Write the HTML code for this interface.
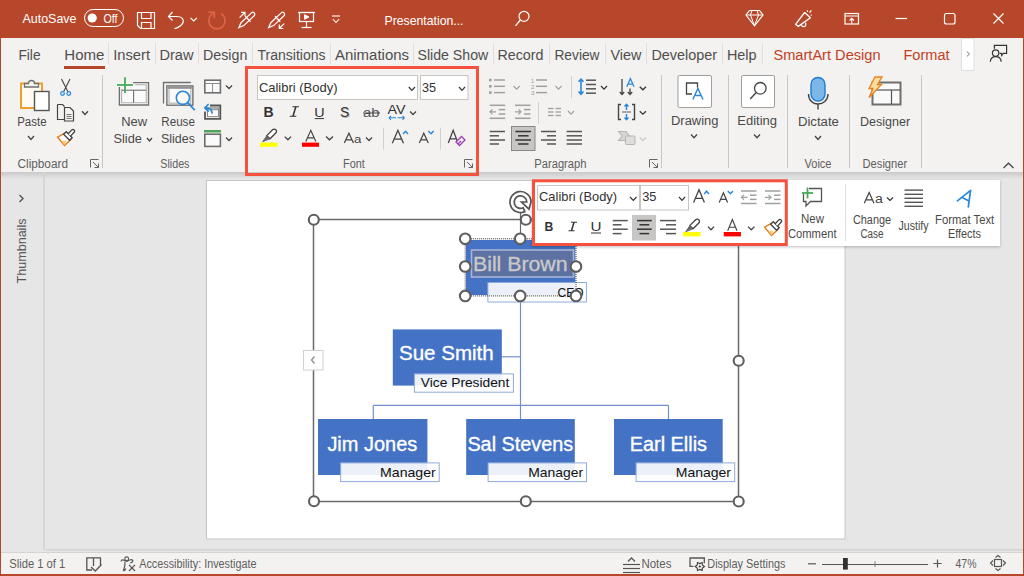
<!DOCTYPE html>
<html><head><meta charset="utf-8"><title>PowerPoint</title>
<style>
html,body{margin:0;padding:0;width:1024px;height:576px;overflow:hidden;background:#E6E6E6}
svg{display:block}
text{font-family:"Liberation Sans",sans-serif}
</style></head><body>
<svg width="1024" height="576" viewBox="0 0 1024 576">
<rect x="0" y="0" width="1024" height="576" fill="#E6E6E6" stroke="none" stroke-width="1" />
<rect x="0" y="0" width="1024" height="38" fill="#B7472A" stroke="none" stroke-width="1" />
<rect x="0" y="38" width="1024" height="134" fill="#F3F2F1" stroke="none" stroke-width="1" />
<defs><linearGradient id="sh" x1="0" y1="0" x2="0" y2="1"><stop offset="0" stop-color="#C9C9C9"/><stop offset="1" stop-color="#E6E6E6"/></linearGradient><filter id="ds" x="-5%" y="-20%" width="110%" height="140%"><feDropShadow dx="0" dy="1" stdDeviation="1.5" flood-color="#000" flood-opacity="0.25"/></filter></defs>
<rect x="0" y="172" width="1024" height="7" fill="url(#sh)" stroke="none" stroke-width="1" />
<rect x="46" y="549" width="978" height="1.6" fill="#D3D3D3" stroke="none" stroke-width="1" />
<rect x="0" y="552" width="1024" height="1" fill="#D4D4D4" stroke="none" stroke-width="1" />
<rect x="0" y="553" width="1024" height="23" fill="#F3F2F1" stroke="none" stroke-width="1" />
<rect x="0" y="37" width="1" height="539" fill="#B7472A" stroke="none" stroke-width="1" />
<rect x="1023" y="37" width="1" height="539" fill="#B7472A" stroke="none" stroke-width="1" />
<rect x="0" y="574" width="1024" height="2" fill="#B7472A" stroke="none" stroke-width="1" />
<text x="22.48" y="23" font-size="13" fill="#FFFFFF" font-weight="normal" font-style="normal" textLength="54.04" lengthAdjust="spacingAndGlyphs" >AutoSave</text>
<rect x="84.5" y="9.5" width="39" height="17" fill="none" stroke="#FFFFFF" stroke-width="1" rx="8.5"/>
<circle cx="92.2" cy="18" r="4.6" fill="#FFFFFF" stroke="none" stroke-width="1" />
<text x="103.52" y="23" font-size="12" fill="#FFFFFF" font-weight="normal" font-style="normal" textLength="13.96" lengthAdjust="spacingAndGlyphs" >Off</text>
<path d="M137.5,12.5 H154.5 V28.5 H140.5 L137.5,25.5 Z" stroke="#FFFFFF" stroke-width="1.2" fill="none" />
<path d="M141.5,12.5 V18.5 H151 V12.5" stroke="#FFFFFF" stroke-width="1.2" fill="none" />
<path d="M141.5,28.5 V22.5 H151 V28.5" stroke="#FFFFFF" stroke-width="1.2" fill="none" />
<path d="M172.5,12 L168.5,16.5 L172.5,20.5" stroke="#FFFFFF" stroke-width="1.2" fill="none" />
<path d="M168.5,16.5 H177 C181.5,16.5 183.8,19 183.2,22 C182.6,24.5 178,27.5 174.5,28.8" stroke="#FFFFFF" stroke-width="1.2" fill="none" />
<path d="M190.5,17.8 L193.75,21 L197,17.8" stroke="#FFFFFF" stroke-width="1.1" fill="none" />
<path d="M211.2,14.8 A8.2,8.2 0 1 0 221.2,13.6" stroke="#E0664C" stroke-width="1.6" fill="none" />
<path d="M208.5,12.3 H214.3 V18.2" stroke="#E0664C" stroke-width="1.6" fill="none" />
<line x1="214.3" y1="12.3" x2="211.2" y2="15.3" stroke="#E0664C" stroke-width="1.4" />
<g transform="translate(238.8,27.6) rotate(-43.5)">
<path d="M0,0 L5,-2 H19.3 A2,2 0 0 1 19.3,2 H5 Z" stroke="#FFFFFF" stroke-width="1.2" fill="none" />
<line x1="12.5" y1="-3.8" x2="12.5" y2="3.8" stroke="#FFFFFF" stroke-width="1.2" />
</g>
<g transform="translate(268.6,27.6) rotate(-43.5)">
<path d="M0,0 L5,-2 H19.3 A2,2 0 0 1 19.3,2 H5 Z" stroke="#FFFFFF" stroke-width="1.2" fill="none" />
<line x1="12.5" y1="-3.8" x2="12.5" y2="3.8" stroke="#FFFFFF" stroke-width="1.2" />
</g>
<path d="M239.6,17.6 L244.6,12.6 M241,12.3 H245 V16.3" stroke="#FFFFFF" stroke-width="1.2" fill="none" />
<path d="M284.2,23.6 L279.3,28.5 M279.3,24.5 V28.5 H283.3" stroke="#FFFFFF" stroke-width="1.2" fill="none" />
<rect x="299.5" y="12.5" width="14" height="9" fill="none" stroke="#FFFFFF" stroke-width="1.2" />
<line x1="298" y1="12.5" x2="315" y2="12.5" stroke="#FFFFFF" stroke-width="1.2" />
<path d="M304.5,14.8 L309,17 L304.5,19.2 Z" stroke="#FFFFFF" stroke-width="1" fill="#FFFFFF" />
<line x1="306.5" y1="21.5" x2="306.5" y2="27.5" stroke="#FFFFFF" stroke-width="1.2" />
<line x1="301.5" y1="27.5" x2="311.5" y2="27.5" stroke="#FFFFFF" stroke-width="1.2" />
<line x1="332" y1="16" x2="340" y2="16" stroke="#FFFFFF" stroke-width="1.1" />
<path d="M332.8,19 L336.0,22.5 L339.2,19" stroke="#FFFFFF" stroke-width="1.1" fill="none" />
<text x="384.48" y="25" font-size="13" fill="#FFFFFF" font-weight="normal" font-style="normal" textLength="79.04" lengthAdjust="spacingAndGlyphs" >Presentation...</text>
<circle cx="524" cy="16.3" r="5" fill="none" stroke="#FFFFFF" stroke-width="1.2" />
<line x1="520.3" y1="20" x2="515.5" y2="25.8" stroke="#FFFFFF" stroke-width="1.3" />
<path d="M749.5,10.5 H759.5 L763,15 L754.5,25.8 L746,15 Z" stroke="#FFFFFF" stroke-width="1.2" fill="none" />
<path d="M746,15 H763 M752,10.5 L750.5,15 L754.5,25.8 L758.5,15 L757,10.5" stroke="#FFFFFF" stroke-width="1" fill="none" />
<path d="M795.6,24.3 L804.6,12.5 L810.4,17.8 L798.3,26.4 Z" stroke="#FFFFFF" stroke-width="1.3" fill="none" stroke-linejoin="round"/>
<path d="M801.6,25 C801.8,27.2 805.5,27.5 805.8,24.6 L805.6,22.6" stroke="#FFFFFF" stroke-width="1.2" fill="none" />
<path d="M807.3,10.3 L807.6,12 M811.3,10.3 L809.6,12.6 M810.6,14.8 L811.8,15.2" stroke="#FFFFFF" stroke-width="1.2" fill="none" />
<rect x="845" y="13.5" width="13.5" height="10.5" fill="none" stroke="#FFFFFF" stroke-width="1.2" />
<line x1="845" y1="16" x2="858.5" y2="16" stroke="#FFFFFF" stroke-width="1" />
<path d="M851.75,23.5 V18.5 M849.5,20.5 L851.75,18.3 L854,20.5" stroke="#FFFFFF" stroke-width="1.1" fill="none" />
<line x1="895.5" y1="18.5" x2="907" y2="18.5" stroke="#FFFFFF" stroke-width="1.2" />
<rect x="944.5" y="13.5" width="10.5" height="10.5" fill="none" stroke="#FFFFFF" stroke-width="1.2" rx="2"/>
<path d="M993.5,13.5 L1003.5,23.5 M1003.5,13.5 L993.5,23.5" stroke="#FFFFFF" stroke-width="1.2" fill="none" />
<text x="18.44" y="59.7" font-size="14" fill="#4F4E4D" font-weight="normal" font-style="normal" textLength="22.12" lengthAdjust="spacingAndGlyphs" >File</text>
<text x="64.34" y="59.7" font-size="14" fill="#4F4E4D" font-weight="normal" font-style="normal" textLength="40.12" lengthAdjust="spacingAndGlyphs" >Home</text>
<text x="113.19" y="59.7" font-size="14" fill="#4F4E4D" font-weight="normal" font-style="normal" textLength="36.87" lengthAdjust="spacingAndGlyphs" >Insert</text>
<text x="159.44" y="59.7" font-size="14" fill="#4F4E4D" font-weight="normal" font-style="normal" textLength="34.12" lengthAdjust="spacingAndGlyphs" >Draw</text>
<text x="203.04" y="59.7" font-size="14" fill="#4F4E4D" font-weight="normal" font-style="normal" textLength="44.27" lengthAdjust="spacingAndGlyphs" >Design</text>
<text x="257.44" y="59.7" font-size="14" fill="#4F4E4D" font-weight="normal" font-style="normal" textLength="68.12" lengthAdjust="spacingAndGlyphs" >Transitions</text>
<text x="334.94" y="59.7" font-size="14" fill="#4F4E4D" font-weight="normal" font-style="normal" textLength="74.12" lengthAdjust="spacingAndGlyphs" >Animations</text>
<text x="417.44" y="59.7" font-size="14" fill="#4F4E4D" font-weight="normal" font-style="normal" textLength="70.87" lengthAdjust="spacingAndGlyphs" >Slide Show</text>
<text x="497.44" y="59.7" font-size="14" fill="#4F4E4D" font-weight="normal" font-style="normal" textLength="46.12" lengthAdjust="spacingAndGlyphs" >Record</text>
<text x="554.44" y="59.7" font-size="14" fill="#4F4E4D" font-weight="normal" font-style="normal" textLength="45.12" lengthAdjust="spacingAndGlyphs" >Review</text>
<text x="610.44" y="59.7" font-size="14" fill="#4F4E4D" font-weight="normal" font-style="normal" textLength="30.87" lengthAdjust="spacingAndGlyphs" >View</text>
<text x="651.44" y="59.7" font-size="14" fill="#4F4E4D" font-weight="normal" font-style="normal" textLength="65.62" lengthAdjust="spacingAndGlyphs" >Developer</text>
<text x="726.94" y="59.7" font-size="14" fill="#4F4E4D" font-weight="normal" font-style="normal" textLength="29.62" lengthAdjust="spacingAndGlyphs" >Help</text>
<rect x="108" y="43" width="1" height="21" fill="#E1DFDD" stroke="none" stroke-width="1" />
<rect x="155" y="43" width="1" height="21" fill="#E1DFDD" stroke="none" stroke-width="1" />
<rect x="198" y="43" width="1" height="21" fill="#E1DFDD" stroke="none" stroke-width="1" />
<rect x="252" y="43" width="1" height="21" fill="#E1DFDD" stroke="none" stroke-width="1" />
<rect x="330" y="43" width="1" height="21" fill="#E1DFDD" stroke="none" stroke-width="1" />
<rect x="413" y="43" width="1" height="21" fill="#E1DFDD" stroke="none" stroke-width="1" />
<rect x="493" y="43" width="1" height="21" fill="#E1DFDD" stroke="none" stroke-width="1" />
<rect x="549" y="43" width="1" height="21" fill="#E1DFDD" stroke="none" stroke-width="1" />
<rect x="605" y="43" width="1" height="21" fill="#E1DFDD" stroke="none" stroke-width="1" />
<rect x="646" y="43" width="1" height="21" fill="#E1DFDD" stroke="none" stroke-width="1" />
<rect x="722" y="43" width="1" height="21" fill="#E1DFDD" stroke="none" stroke-width="1" />
<rect x="762" y="43" width="1" height="21" fill="#E1DFDD" stroke="none" stroke-width="1" />
<rect x="64" y="66" width="41" height="3" fill="#B7472A" stroke="none" stroke-width="1" />
<text x="773.44" y="59.7" font-size="14" fill="#C43E1C" font-weight="normal" font-style="normal" textLength="107.12" lengthAdjust="spacingAndGlyphs" >SmartArt Design</text>
<text x="903.44" y="59.7" font-size="14" fill="#C43E1C" font-weight="normal" font-style="normal" textLength="46.12" lengthAdjust="spacingAndGlyphs" >Format</text>
<rect x="961.5" y="38.5" width="12.5" height="32" fill="#FFFFFF" stroke="#E1DFDD" stroke-width="1" />
<path d="M966.8,51.5 L969.5,54 L966.8,56.5" stroke="#777" stroke-width="1" fill="none" />
<circle cx="995.6" cy="53.1" r="3.2" fill="none" stroke="#333" stroke-width="1.2" />
<path d="M990.3,61.8 C990.5,58.5 993,56.7 995.7,56.7 C998.5,56.7 1001,58.5 1001.2,61.8" stroke="#333" stroke-width="1.2" fill="none" />
<path d="M994.4,48.8 V45.4 H1006.6 V53.3 H1003.2 L1001.8,55.6 L1001.2,53.3 H999.6" stroke="#333" stroke-width="1.2" fill="none" />
<rect x="21" y="83.5" width="21" height="24.5" fill="#FFFBF2" stroke="#EE9F2E" stroke-width="2" />
<path d="M24.5,87 V83.5 H28.5 C28.5,79.5 34.5,79.5 34.5,83.5 H38.5 V87 Z" stroke="#707070" stroke-width="1.3" fill="#F3F2F1" />
<rect x="34.5" y="91.5" width="14.5" height="19" fill="#FFFFFF" stroke="#555" stroke-width="1.4" />
<text x="17.20" y="126" font-size="12.5" fill="#4A4948" font-weight="normal" font-style="normal" textLength="29.40" lengthAdjust="spacingAndGlyphs" >Paste</text>
<path d="M28,136 L31.0,139.5 L34,136" stroke="#444" stroke-width="1.3" fill="none" />
<path d="M61.5,79 L67.8,91.5 M70,79 L63.7,91.5" stroke="#444" stroke-width="1.1" fill="none" />
<circle cx="62.5" cy="93.5" r="1.8" fill="none" stroke="#2B88D8" stroke-width="1.3" />
<circle cx="68.8" cy="93.5" r="1.8" fill="none" stroke="#2B88D8" stroke-width="1.3" />
<path d="M57.5,104.5 H62.5 L64.5,106.5 M57.5,104.5 V119.5 H64" stroke="#444" stroke-width="1.2" fill="none" />
<path d="M64.5,107.5 H70 L73.5,111 V121 H64.5 Z" stroke="#444" stroke-width="1.2" fill="none" />
<path d="M66.5,114.5 H71.5 M66.5,116.5 H71.5 M66.5,118.5 H71.5" stroke="#666" stroke-width="0.9" fill="none" />
<path d="M82,111.2 L85.0,114.5 L88,111.2" stroke="#444" stroke-width="1.3" fill="none" />
<g transform="translate(0,0)">
<path d="M64.3,133.3 L57.6,137.2 L64.5,145.5 L70.8,139.5 Z" stroke="#E67C16" stroke-width="1.4" fill="#FFFFFF" />
<path d="M61.5,141.3 L66.5,140.6 L64.5,145 Z" stroke="none" stroke-width="0" fill="#F9C976" />
<path d="M63.6,134.2 L66.3,131.7 L72.2,137.8 L69.6,140.3 Z" stroke="#404040" stroke-width="1.3" fill="#FFFFFF" />
<path d="M68.2,133.8 L71.8,129.9 C72.5,129.3 73.5,129.3 74.1,130 C74.8,130.6 74.8,131.6 74.1,132.3 L70.5,136.1" stroke="#404040" stroke-width="1.3" fill="#FFFFFF" />
</g>
<text x="17.52" y="167.5" font-size="12" fill="#5F5E5C" font-weight="normal" font-style="normal" textLength="50.46" lengthAdjust="spacingAndGlyphs" >Clipboard</text>
<path d="M90.5,167.5 V159.5 H98.5" stroke="#666" stroke-width="1" fill="none" />
<path d="M93,162 L98.5,167.5 M98.5,163.5 V167.5 H94.5" stroke="#666" stroke-width="1" fill="none" />
<rect x="102" y="75" width="1" height="93" fill="#C8C6C4" stroke="none" stroke-width="1" />
<rect x="120" y="83" width="28.5" height="22" fill="#FAFAFA" stroke="none" stroke-width="1" />
<path d="M133,82.6 H148.5 V105 H119.4 V87" stroke="#707070" stroke-width="1.4" fill="none" />
<path d="M135,84.8 H146.3 V102.8 H121.6 V89" stroke="#B0B0B0" stroke-width="1.1" fill="none" />
<line x1="122" y1="90.2" x2="146" y2="90.2" stroke="#707070" stroke-width="1.1" />
<line x1="133.6" y1="90.2" x2="133.6" y2="102.8" stroke="#707070" stroke-width="1.1" />
<line x1="117" y1="85" x2="133" y2="85" stroke="#4FAE62" stroke-width="1.9" />
<line x1="125" y1="77.2" x2="125" y2="93" stroke="#4FAE62" stroke-width="1.9" />
<text x="121.20" y="125.5" font-size="12.5" fill="#4A4948" font-weight="normal" font-style="normal" textLength="25.90" lengthAdjust="spacingAndGlyphs" >New</text>
<text x="113.50" y="143" font-size="12.5" fill="#4A4948" font-weight="normal" font-style="normal" textLength="28.30" lengthAdjust="spacingAndGlyphs" >Slide</text>
<path d="M147,138 L149.5,141 L152,138" stroke="#444" stroke-width="1.3" fill="none" />
<path d="M163.5,103.5 V82.5 H190.8" stroke="#707070" stroke-width="1.3" fill="none" />
<rect x="167" y="86" width="25.5" height="19" fill="#FAFAFA" stroke="none" stroke-width="1" />
<rect x="166.9" y="85.9" width="26" height="19.3" fill="none" stroke="#707070" stroke-width="1.4" />
<rect x="169" y="88" width="21.8" height="15.2" fill="none" stroke="#B0B0B0" stroke-width="1.1" />
<rect x="167.5" y="86.5" width="25" height="2.2" fill="#909090" stroke="none" stroke-width="1" />
<circle cx="182.9" cy="97.8" r="6.6" fill="#FAFAFA" stroke="#2B88D8" stroke-width="1.6" />
<line x1="187.6" y1="102.6" x2="194.8" y2="110.2" stroke="#2B88D8" stroke-width="1.7" />
<text x="161.30" y="125.5" font-size="12.5" fill="#4A4948" font-weight="normal" font-style="normal" textLength="33.60" lengthAdjust="spacingAndGlyphs" >Reuse</text>
<text x="161.00" y="143" font-size="12.5" fill="#4A4948" font-weight="normal" font-style="normal" textLength="33.90" lengthAdjust="spacingAndGlyphs" >Slides</text>
<rect x="204.8" y="80.2" width="15.6" height="12.6" fill="#FAFAFA" stroke="#6E6E6E" stroke-width="1.6" />
<line x1="205" y1="83.5" x2="220" y2="83.5" stroke="#8A8A8A" stroke-width="1" />
<line x1="212.6" y1="83.5" x2="212.6" y2="92" stroke="#8A8A8A" stroke-width="1" />
<path d="M226,85.5 L229.0,88.5 L232,85.5" stroke="#444" stroke-width="1.3" fill="none" />
<path d="M210,105.5 H220.3 V118.8 H205 V111.5" stroke="#555" stroke-width="1.8" fill="none" />
<rect x="207.5" y="107.8" width="11" height="8.8" fill="#FAFAFA" stroke="#8A8A8A" stroke-width="1" />
<rect x="208" y="108.3" width="10" height="2" fill="#A0A0A0" stroke="none" stroke-width="1" />
<path d="M212,113 C212,110 210.5,107.8 205.5,107.8 M208.2,104.5 L204.8,107.8 L208.2,111.2" stroke="#2B88D8" stroke-width="1.7" fill="none" stroke-linecap="round" stroke-linejoin="round"/>
<rect x="204" y="130" width="17" height="2.5" fill="#4CA65A" stroke="none" stroke-width="1" />
<rect x="204.8" y="134.2" width="15.6" height="12.2" fill="#FAFAFA" stroke="#6E6E6E" stroke-width="1.6" />
<path d="M226,137.5 L229.0,140.5 L232,137.5" stroke="#444" stroke-width="1.3" fill="none" />
<text x="160.32" y="167.6" font-size="12" fill="#5F5E5C" font-weight="normal" font-style="normal" textLength="29.16" lengthAdjust="spacingAndGlyphs" >Slides</text>
<rect x="257.5" y="75.5" width="160" height="24" fill="#FFFFFF" stroke="#C8C6C4" stroke-width="1" />
<text x="258.88" y="91.75" font-size="13" fill="#323130" font-weight="normal" font-style="normal" textLength="78.64" lengthAdjust="spacingAndGlyphs" >Calibri (Body)</text>
<path d="M408.75,87 L411.875,90.3 L415,87" stroke="#333" stroke-width="1.2" fill="none" />
<rect x="420.5" y="75.5" width="47.5" height="24" fill="#FFFFFF" stroke="#C8C6C4" stroke-width="1" />
<text x="421.98" y="91.75" font-size="13" fill="#323130" font-weight="normal" font-style="normal" textLength="14.14" lengthAdjust="spacingAndGlyphs" >35</text>
<path d="M459,87 L462.0,90.3 L465,87" stroke="#333" stroke-width="1.2" fill="none" />
<text x="263.44" y="116.5" font-size="14" fill="#333" font-weight="bold" font-style="normal" textLength="10.12" lengthAdjust="spacingAndGlyphs" >B</text>
<path d="M292.5,106.8 H299 M289.8,116.3 H296.3" stroke="#333" stroke-width="1.1" fill="none" />
<line x1="295.8" y1="106.8" x2="293" y2="116.3" stroke="#333" stroke-width="1.5" />
<text x="314.21" y="116.5" font-size="13.5" fill="#333" font-weight="normal" font-style="normal" textLength="10.33" lengthAdjust="spacingAndGlyphs" >U</text>
<line x1="314.75" y1="118.6" x2="324" y2="118.6" stroke="#333" stroke-width="1" />
<text x="341.04" y="117.5" font-size="14" fill="#BDBDBD" font-weight="normal" font-style="normal" textLength="9.27" lengthAdjust="spacingAndGlyphs" >S</text>
<text x="340.04" y="116.5" font-size="14" fill="#333" font-weight="normal" font-style="normal" textLength="9.27" lengthAdjust="spacingAndGlyphs" >S</text>
<text x="363.00" y="116.5" font-size="12.5" fill="#555" font-weight="normal" font-style="normal" textLength="16.50" lengthAdjust="spacingAndGlyphs" >ab</text>
<line x1="363" y1="113" x2="380" y2="113" stroke="#444" stroke-width="1" />
<text x="387.48" y="114" font-size="13" fill="#333" font-weight="normal" font-style="normal" textLength="18.04" lengthAdjust="spacingAndGlyphs" >AV</text>
<path d="M389,117.8 H396 M389,117.8 L391,115.8 M389,117.8 L391,119.8 M397.5,117.8 H404.5 M404.5,117.8 L402.5,115.8 M404.5,117.8 L402.5,119.8" stroke="#2B88D8" stroke-width="1.1" fill="none" />
<path d="M410,111.5 L413.0,114.5 L416,111.5" stroke="#444" stroke-width="1.3" fill="none" />
<g transform="translate(0,0)">
<path d="M266.8,135.6 L272.6,129.8 C273.5,128.9 274.9,128.9 275.8,129.8 C276.7,130.7 276.7,132.1 275.8,133 L270,138.8 Z" stroke="#404040" stroke-width="1.3" fill="#FFFFFF" />
<path d="M266.8,135.6 L262.6,141.8 L270,138.8 Z" stroke="#606060" stroke-width="0.8" fill="#6A6A6A" />
</g>
<rect x="260" y="142.6" width="17.5" height="4.2" fill="#FFFF00" stroke="none" stroke-width="1" />
<path d="M284.75,136.6 L287.875,139.8 L291,136.6" stroke="#444" stroke-width="1.3" fill="none" />
<path d="M305.8,141.4 L310.8,130.3 L315.8,141.4 M307.80,137.85 H313.80" stroke="#444" stroke-width="1.15" fill="none" stroke-linejoin="miter"/>
<rect x="302" y="142.6" width="17" height="4.2" fill="#FF0000" stroke="none" stroke-width="1" />
<path d="M326,136.6 L329.5,139.8 L333,136.6" stroke="#444" stroke-width="1.3" fill="none" />
<path d="M344.3,143 L348.9,133.2 L353.5,143 M346.14,139.86 H351.66" stroke="#444" stroke-width="1.2" fill="none" stroke-linejoin="miter"/>
<text x="354.04" y="143" font-size="11.5" fill="#444" font-weight="normal" font-style="normal" textLength="7.42" lengthAdjust="spacingAndGlyphs" >a</text>
<path d="M366,137.5 L369.0,140.5 L372,137.5" stroke="#444" stroke-width="1.3" fill="none" />
<rect x="383" y="127.6" width="1" height="22" fill="#D2D0CE" stroke="none" stroke-width="1" />
<path d="M392.3,143.2 L397.9,130.3 L403.5,143.2 M394.54,139.07 H401.26" stroke="#444" stroke-width="1.3" fill="none" stroke-linejoin="miter"/>
<path d="M403,134 L405.5,131.2 L408,134" stroke="#2B88D8" stroke-width="1.4" fill="none" />
<path d="M419.3,143 L423.8,133.2 L428.3,143 M421.10,139.86 H426.50" stroke="#444" stroke-width="1.2" fill="none" stroke-linejoin="miter"/>
<path d="M428.3,131 L431,133.8 L433.7,131" stroke="#2B88D8" stroke-width="1.4" fill="none" />
<rect x="440" y="127.6" width="1" height="22" fill="#D2D0CE" stroke="none" stroke-width="1" />
<path d="M448.3,143 L453.15,130.3 L458,143 M450.24,138.94 H456.06" stroke="#444" stroke-width="1.3" fill="none" stroke-linejoin="miter"/>
<path d="M456,142 L461.5,136.5 L465,140 L459.5,145.5 Z" stroke="#A03BB8" stroke-width="1.3" fill="#F3F2F1" />
<path d="M458,144 L461,141" stroke="#A03BB8" stroke-width="1.2" fill="none" />
<text x="343.02" y="167.6" font-size="12" fill="#5F5E5C" font-weight="normal" font-style="normal" textLength="21.86" lengthAdjust="spacingAndGlyphs" >Font</text>
<path d="M464.5,167.5 V159.5 H472.5" stroke="#666" stroke-width="1" fill="none" />
<path d="M467,162 L472.5,167.5 M472.5,163.5 V167.5 H468.5" stroke="#666" stroke-width="1" fill="none" />
<rect x="489" y="78.7" width="2.6" height="2.6" fill="#A19F9D" stroke="none" stroke-width="1" />
<line x1="494" y1="80" x2="505" y2="80" stroke="#A19F9D" stroke-width="1.5" />
<rect x="489" y="85.0" width="2.6" height="2.6" fill="#A19F9D" stroke="none" stroke-width="1" />
<line x1="494" y1="86.3" x2="505" y2="86.3" stroke="#A19F9D" stroke-width="1.5" />
<rect x="489" y="91.3" width="2.6" height="2.6" fill="#A19F9D" stroke="none" stroke-width="1" />
<line x1="494" y1="92.6" x2="505" y2="92.6" stroke="#A19F9D" stroke-width="1.5" />
<path d="M513.5,86 L516.625,89.2 L519.75,86" stroke="#A19F9D" stroke-width="1.1" fill="none" />
<text x="530.80" y="82.5" font-size="5" fill="#A19F9D" font-weight="normal" font-style="normal" textLength="3.40" lengthAdjust="spacingAndGlyphs" >1</text>
<text x="530.80" y="88.8" font-size="5" fill="#A19F9D" font-weight="normal" font-style="normal" textLength="3.90" lengthAdjust="spacingAndGlyphs" >2</text>
<text x="530.80" y="95" font-size="5" fill="#A19F9D" font-weight="normal" font-style="normal" textLength="3.90" lengthAdjust="spacingAndGlyphs" >3</text>
<line x1="536" y1="80" x2="547" y2="80" stroke="#A19F9D" stroke-width="1.5" />
<line x1="536" y1="86.3" x2="547" y2="86.3" stroke="#A19F9D" stroke-width="1.5" />
<line x1="536" y1="92.6" x2="547" y2="92.6" stroke="#A19F9D" stroke-width="1.5" />
<path d="M555.4,86 L558.5,89.2 L561.6,86" stroke="#A19F9D" stroke-width="1.1" fill="none" />
<rect x="571" y="76" width="1" height="22" fill="#D2D0CE" stroke="none" stroke-width="1" />
<path d="M581,79 V94 M578.5,81.8 L581,79.2 L583.5,81.8 M578.5,91.5 L581,94.2 L583.5,91.5" stroke="#2B88D8" stroke-width="1.6" fill="none" />
<line x1="586" y1="80.2" x2="596" y2="80.2" stroke="#555" stroke-width="1.5" />
<line x1="586" y1="84.5" x2="596" y2="84.5" stroke="#555" stroke-width="1.5" />
<line x1="586" y1="88.8" x2="596" y2="88.8" stroke="#555" stroke-width="1.5" />
<line x1="586" y1="93.2" x2="596" y2="93.2" stroke="#555" stroke-width="1.5" />
<path d="M601,86 L604.0,89.2 L607,86" stroke="#333" stroke-width="1.2" fill="none" />
<line x1="489.75" y1="105.3" x2="505.25" y2="105.3" stroke="#A19F9D" stroke-width="1.5" />
<line x1="489.75" y1="118.3" x2="505.25" y2="118.3" stroke="#A19F9D" stroke-width="1.5" />
<line x1="498.75" y1="109.6" x2="505.25" y2="109.6" stroke="#A19F9D" stroke-width="1.5" />
<line x1="498.75" y1="114" x2="505.25" y2="114" stroke="#A19F9D" stroke-width="1.5" />
<line x1="515" y1="105.3" x2="530.5" y2="105.3" stroke="#A19F9D" stroke-width="1.5" />
<line x1="515" y1="118.3" x2="530.5" y2="118.3" stroke="#A19F9D" stroke-width="1.5" />
<line x1="524" y1="109.6" x2="530.5" y2="109.6" stroke="#A19F9D" stroke-width="1.5" />
<line x1="524" y1="114" x2="530.5" y2="114" stroke="#A19F9D" stroke-width="1.5" />
<path d="M490,111.8 H496 M492.5,109.3 L490,111.8 L492.5,114.3" stroke="#A19F9D" stroke-width="1.2" fill="none" />
<path d="M515,111.8 H521 M518.5,109.3 L521,111.8 L518.5,114.3" stroke="#A19F9D" stroke-width="1.2" fill="none" />
<rect x="538" y="102" width="1" height="22" fill="#D2D0CE" stroke="none" stroke-width="1" />
<line x1="548" y1="108.5" x2="553.5" y2="108.5" stroke="#A19F9D" stroke-width="1.3" />
<line x1="555.5" y1="108.5" x2="561" y2="108.5" stroke="#A19F9D" stroke-width="1.3" />
<line x1="548" y1="112" x2="553.5" y2="112" stroke="#A19F9D" stroke-width="1.3" />
<line x1="555.5" y1="112" x2="561" y2="112" stroke="#A19F9D" stroke-width="1.3" />
<line x1="548" y1="115.5" x2="553.5" y2="115.5" stroke="#A19F9D" stroke-width="1.3" />
<line x1="555.5" y1="115.5" x2="561" y2="115.5" stroke="#A19F9D" stroke-width="1.3" />
<path d="M568,111 L571.0,114.2 L574,111" stroke="#A19F9D" stroke-width="1.1" fill="none" />
<rect x="511.5" y="126.5" width="23.5" height="24" fill="#C8C6C4" stroke="#8A8886" stroke-width="1" />
<line x1="489.75" y1="131.5" x2="505" y2="131.5" stroke="#555" stroke-width="1.5" />
<line x1="489.75" y1="135.8" x2="499" y2="135.8" stroke="#555" stroke-width="1.5" />
<line x1="489.75" y1="140" x2="505" y2="140" stroke="#555" stroke-width="1.5" />
<line x1="489.75" y1="144" x2="499" y2="144" stroke="#555" stroke-width="1.5" />
<line x1="515.4" y1="131.5" x2="531" y2="131.5" stroke="#333" stroke-width="1.5" />
<line x1="518" y1="135.8" x2="528.5" y2="135.8" stroke="#333" stroke-width="1.5" />
<line x1="515.4" y1="140" x2="531" y2="140" stroke="#333" stroke-width="1.5" />
<line x1="518" y1="144" x2="528.5" y2="144" stroke="#333" stroke-width="1.5" />
<line x1="541" y1="131.5" x2="556" y2="131.5" stroke="#555" stroke-width="1.5" />
<line x1="547" y1="135.8" x2="556" y2="135.8" stroke="#555" stroke-width="1.5" />
<line x1="541" y1="140" x2="556" y2="140" stroke="#555" stroke-width="1.5" />
<line x1="547" y1="144" x2="556" y2="144" stroke="#555" stroke-width="1.5" />
<line x1="566.6" y1="131.5" x2="582" y2="131.5" stroke="#555" stroke-width="1.5" />
<line x1="566.6" y1="135.8" x2="582" y2="135.8" stroke="#555" stroke-width="1.5" />
<line x1="566.6" y1="140" x2="582" y2="140" stroke="#555" stroke-width="1.5" />
<line x1="566.6" y1="144" x2="582" y2="144" stroke="#555" stroke-width="1.5" />
<path d="M622,79 V94.5 M619.8,92 L622,94.6 L624.2,92" stroke="#444" stroke-width="1.3" fill="none" />
<path d="M630,88.5 V94.5 M627.8,92 L630,94.6 L632.2,92" stroke="#444" stroke-width="1.3" fill="none" />
<path d="M626.8,86.8 L630.4,78.6 L634,86.8 M628.24,84.18 H632.56" stroke="#2B88D8" stroke-width="1.3" fill="none" stroke-linejoin="miter"/>
<path d="M639.75,86.8 L642.875,89.8 L646,86.8" stroke="#333" stroke-width="1.2" fill="none" />
<path d="M621,104.5 H618.5 V119.5 H621 M632,104.5 H634.5 V119.5 H632" stroke="#444" stroke-width="1.4" fill="none" />
<line x1="622" y1="112" x2="631" y2="112" stroke="#777" stroke-width="1.2" />
<path d="M626.5,104.5 V110 M624.5,106.5 L626.5,104.3 L628.5,106.5 M626.5,114 V119.5 M624.5,117.5 L626.5,119.7 L628.5,117.5" stroke="#2B88D8" stroke-width="1.4" fill="none" />
<path d="M639.75,111.2 L642.875,114.2 L646,111.2" stroke="#333" stroke-width="1.2" fill="none" />
<path d="M618.5,131.5 H626 L629.5,136 L626,140.5 H618.5 L622,136 Z" stroke="#B8B6B4" stroke-width="1.1" fill="#D8D6D4" />
<rect x="625.5" y="136" width="9.5" height="8.5" fill="#E0DEDC" stroke="#B8B6B4" stroke-width="1" rx="1"/>
<path d="M639.75,137.5 L642.875,140.5 L646,137.5" stroke="#C8C6C4" stroke-width="1.1" fill="none" />
<text x="534.27" y="167.6" font-size="12" fill="#5F5E5C" font-weight="normal" font-style="normal" textLength="52.21" lengthAdjust="spacingAndGlyphs" >Paragraph</text>
<path d="M649.5,167.5 V159.5 H657.5" stroke="#666" stroke-width="1" fill="none" />
<path d="M652,162 L657.5,167.5 M657.5,163.5 V167.5 H653.5" stroke="#666" stroke-width="1" fill="none" />
<rect x="661" y="75" width="1" height="93" fill="#C8C6C4" stroke="none" stroke-width="1" />
<rect x="678" y="75.5" width="33.5" height="32" fill="#FFFFFF" stroke="#A19F9D" stroke-width="1" rx="1.5"/>
<path d="M697.5,87.5 V83 H686.5 V94 H692" stroke="#444" stroke-width="1.3" fill="none" />
<path d="M692.8,99.5 L697.9,88.5 L703,99.5 M694.7,95.5 H701.1" stroke="#2B88D8" stroke-width="1.4" fill="none" />
<text x="671.00" y="124.5" font-size="12.5" fill="#4A4948" font-weight="normal" font-style="normal" textLength="47.50" lengthAdjust="spacingAndGlyphs" >Drawing</text>
<path d="M691,134.5 L694.0,137.8 L697,134.5" stroke="#444" stroke-width="1.3" fill="none" />
<rect x="728" y="75" width="1" height="93" fill="#C8C6C4" stroke="none" stroke-width="1" />
<rect x="741.5" y="75.5" width="33" height="32" fill="#FFFFFF" stroke="#A19F9D" stroke-width="1" rx="1.5"/>
<circle cx="760.3" cy="88.3" r="5.8" fill="none" stroke="#444" stroke-width="1.3" />
<line x1="756.2" y1="92.5" x2="750.2" y2="99" stroke="#444" stroke-width="1.4" />
<text x="737.25" y="124.5" font-size="12.5" fill="#4A4948" font-weight="normal" font-style="normal" textLength="39.75" lengthAdjust="spacingAndGlyphs" >Editing</text>
<path d="M754,134.5 L757.0,137.8 L760,134.5" stroke="#444" stroke-width="1.3" fill="none" />
<rect x="787" y="75" width="1" height="93" fill="#C8C6C4" stroke="none" stroke-width="1" />
<rect x="811" y="77.5" width="14" height="23.5" fill="#7CB7EA" stroke="#1F7BD0" stroke-width="1.4" rx="7"/>
<path d="M808.5,94 C808.5,100 812.5,104 818,104 C823.5,104 828,100 828,94" stroke="#444" stroke-width="1.4" fill="none" />
<line x1="818" y1="104" x2="818" y2="109.6" stroke="#444" stroke-width="1.4" />
<text x="797.90" y="125.5" font-size="12.5" fill="#4A4948" font-weight="normal" font-style="normal" textLength="41.00" lengthAdjust="spacingAndGlyphs" >Dictate</text>
<path d="M815,136 L818.0,139.5 L821,136" stroke="#444" stroke-width="1.3" fill="none" />
<text x="804.52" y="167.6" font-size="12" fill="#5F5E5C" font-weight="normal" font-style="normal" textLength="26.96" lengthAdjust="spacingAndGlyphs" >Voice</text>
<rect x="849" y="75" width="1" height="93" fill="#C8C6C4" stroke="none" stroke-width="1" />
<rect x="872.5" y="82.5" width="28" height="22" fill="#FAFAFA" stroke="#6E6E6E" stroke-width="2" />
<line x1="873" y1="90" x2="900" y2="90" stroke="#555" stroke-width="1.2" />
<line x1="891.5" y1="90" x2="891.5" y2="104" stroke="#555" stroke-width="1.2" />
<path d="M875,77 H882 L877.5,84.5 H881.5 L869,97.5 L873,88.5 H869 Z" stroke="#E8821E" stroke-width="1.3" fill="#FCDFA0" />
<text x="860.00" y="125.5" font-size="12.5" fill="#4A4948" font-weight="normal" font-style="normal" textLength="50.10" lengthAdjust="spacingAndGlyphs" >Designer</text>
<text x="862.52" y="167.6" font-size="12" fill="#5F5E5C" font-weight="normal" font-style="normal" textLength="44.71" lengthAdjust="spacingAndGlyphs" >Designer</text>
<rect x="921" y="75" width="1" height="93" fill="#C8C6C4" stroke="none" stroke-width="1" />
<path d="M1003.5,168 L1008.5,163.2 L1013.5,168" stroke="#444" stroke-width="1.2" fill="none" />
<rect x="43" y="172" width="2" height="378" fill="#D6D6D6" stroke="none" stroke-width="1" />
<path d="M19.5,195 L23,198.5 L19.5,202" stroke="#555" stroke-width="1.4" fill="none" />
<text x="0" y="0" font-size="13" fill="#555" textLength="65" lengthAdjust="spacingAndGlyphs" transform="translate(26,283.5) rotate(-90)">Thumbnails</text>
<rect x="206.5" y="180.5" width="638.5" height="358.5" fill="#FFFFFF" stroke="#C8C6C4" stroke-width="1" />
<rect x="313.5" y="219.5" width="425" height="282" fill="none" stroke="#6A6A6A" stroke-width="1.5" />
<line x1="520.5" y1="302" x2="520.5" y2="419" stroke="#7090CC" stroke-width="1.2" />
<line x1="501.5" y1="356.8" x2="520.5" y2="356.8" stroke="#7090CC" stroke-width="1.2" />
<line x1="373.3" y1="405.3" x2="668.5" y2="405.3" stroke="#7090CC" stroke-width="1.2" />
<line x1="373.3" y1="405.3" x2="373.3" y2="419" stroke="#7090CC" stroke-width="1.2" />
<line x1="668.5" y1="405.3" x2="668.5" y2="419" stroke="#7090CC" stroke-width="1.2" />
<rect x="466" y="240" width="109.3" height="55" fill="#4472C4" stroke="none" stroke-width="1" />
<rect x="392.8" y="329.4" width="109" height="56.2" fill="#4472C4" stroke="none" stroke-width="1" />
<rect x="318" y="419" width="109.4" height="56" fill="#4472C4" stroke="none" stroke-width="1" />
<rect x="466.2" y="419" width="108.6" height="56" fill="#4472C4" stroke="none" stroke-width="1" />
<rect x="614" y="419" width="108.7" height="56" fill="#4472C4" stroke="none" stroke-width="1" />
<rect x="471.5" y="250" width="102" height="27" fill="#5E71A3" stroke="#A7B4D6" stroke-width="1.6" />
<text x="472.98" y="270.6" font-size="20.5" fill="#C9C9C9" font-weight="normal" font-style="normal" textLength="94.59" lengthAdjust="spacingAndGlyphs" stroke="#C9C9C9" stroke-width="0.35">Bill Brown</text>
<text x="398.98" y="359.8" font-size="20.5" fill="#FFFFFF" font-weight="normal" font-style="normal" textLength="94.74" lengthAdjust="spacingAndGlyphs" stroke="#FFFFFF" stroke-width="0.35">Sue Smith</text>
<text x="327.38" y="450.7" font-size="20.5" fill="#FFFFFF" font-weight="normal" font-style="normal" textLength="89.94" lengthAdjust="spacingAndGlyphs" stroke="#FFFFFF" stroke-width="0.35">Jim Jones</text>
<text x="467.38" y="450.7" font-size="20.5" fill="#FFFFFF" font-weight="normal" font-style="normal" textLength="105.84" lengthAdjust="spacingAndGlyphs" stroke="#FFFFFF" stroke-width="0.35">Sal Stevens</text>
<text x="629.68" y="450.7" font-size="20.5" fill="#FFFFFF" font-weight="normal" font-style="normal" textLength="77.39" lengthAdjust="spacingAndGlyphs" stroke="#FFFFFF" stroke-width="0.35">Earl Ellis</text>
<rect x="487.9" y="282.5" width="98.5" height="19.5" fill="#FFFFFF" stroke="#8FAADC" stroke-width="1" fill-opacity="0.9"/>
<text x="557.48" y="296.6" font-size="13" fill="#111" font-weight="normal" font-style="normal" textLength="26.04" lengthAdjust="spacingAndGlyphs" >CEO</text>
<rect x="414.4" y="373.9" width="99" height="18.3" fill="#FFFFFF" stroke="#8FAADC" stroke-width="1" fill-opacity="0.9"/>
<text x="420.88" y="386.8" font-size="13" fill="#111" font-weight="normal" font-style="normal" textLength="88.44" lengthAdjust="spacingAndGlyphs" >Vice President</text>
<rect x="340.7" y="462.9" width="98.5" height="18.7" fill="#FFFFFF" stroke="#8FAADC" stroke-width="1" fill-opacity="0.9"/>
<text x="380.08" y="476.5" font-size="13" fill="#111" font-weight="normal" font-style="normal" textLength="55.69" lengthAdjust="spacingAndGlyphs" >Manager</text>
<rect x="488.1" y="462.9" width="98.4" height="18.7" fill="#FFFFFF" stroke="#8FAADC" stroke-width="1" fill-opacity="0.9"/>
<text x="528.18" y="476.5" font-size="13" fill="#111" font-weight="normal" font-style="normal" textLength="54.94" lengthAdjust="spacingAndGlyphs" >Manager</text>
<rect x="636.1" y="462.9" width="98.6" height="18.7" fill="#FFFFFF" stroke="#8FAADC" stroke-width="1" fill-opacity="0.9"/>
<text x="675.73" y="476.5" font-size="13" fill="#111" font-weight="normal" font-style="normal" textLength="55.29" lengthAdjust="spacingAndGlyphs" >Manager</text>
<rect x="465.2" y="238.8" width="110.8" height="57.1" fill="none" stroke="#333" stroke-width="1" stroke-dasharray="1,1"/>
<line x1="520.5" y1="211.5" x2="520.5" y2="234" stroke="#6A6A6A" stroke-width="1.2" />
<path d="M531,202 A10.5,10.5 0 1 0 524.8,211.6 L523.2,207.8 A6.3,6.3 0 1 1 526.8,202 L521.5,202 L529,209.2 Z" stroke="#555" stroke-width="1.7" fill="#FFFFFF" />
<circle cx="313.8" cy="219.7" r="5" fill="#FFFFFF" stroke="#5E5E5E" stroke-width="2.1" />
<circle cx="525.8" cy="219.8" r="5" fill="#FFFFFF" stroke="#5E5E5E" stroke-width="2.1" />
<circle cx="738.6" cy="219.7" r="5" fill="#FFFFFF" stroke="#5E5E5E" stroke-width="2.1" />
<circle cx="313.8" cy="360.6" r="5" fill="#FFFFFF" stroke="#5E5E5E" stroke-width="2.1" />
<circle cx="738.7" cy="360.8" r="5" fill="#FFFFFF" stroke="#5E5E5E" stroke-width="2.1" />
<circle cx="314" cy="501.3" r="5" fill="#FFFFFF" stroke="#5E5E5E" stroke-width="2.1" />
<circle cx="525.8" cy="501.3" r="5" fill="#FFFFFF" stroke="#5E5E5E" stroke-width="2.1" />
<circle cx="738.7" cy="501.5" r="5" fill="#FFFFFF" stroke="#5E5E5E" stroke-width="2.1" />
<circle cx="465.2" cy="238.8" r="5.3" fill="#FFFFFF" stroke="#5E5E5E" stroke-width="2.1" />
<circle cx="520.2" cy="238.8" r="5.3" fill="#FFFFFF" stroke="#5E5E5E" stroke-width="2.1" />
<circle cx="465.2" cy="266.5" r="5.3" fill="#FFFFFF" stroke="#5E5E5E" stroke-width="2.1" />
<circle cx="576" cy="266.5" r="5.3" fill="#FFFFFF" stroke="#5E5E5E" stroke-width="2.1" />
<circle cx="465.2" cy="295.9" r="5.3" fill="#FFFFFF" stroke="#5E5E5E" stroke-width="2.1" />
<circle cx="520.2" cy="295.9" r="5.3" fill="#FFFFFF" stroke="#5E5E5E" stroke-width="2.1" />
<circle cx="576" cy="295.9" r="5.3" fill="#FFFFFF" stroke="#5E5E5E" stroke-width="2.1" />
<rect x="303.5" y="350.5" width="19.5" height="19.5" fill="#FFFFFF" stroke="#D0D0D0" stroke-width="1" />
<path d="M314.5,356.5 L311.5,360 L314.5,363.5" stroke="#888" stroke-width="1.2" fill="none" />
<g filter="url(#ds)">
<rect x="532" y="180" width="468" height="66" fill="#FFFFFF" stroke="none" stroke-width="1" />
</g>
<rect x="845" y="184" width="1" height="57" fill="#E1DFDD" stroke="none" stroke-width="1" />
<rect x="537.5" y="185.5" width="102" height="24.5" fill="#FFFFFF" stroke="#C8C6C4" stroke-width="1" />
<text x="539.08" y="201.4" font-size="13" fill="#323130" font-weight="normal" font-style="normal" textLength="77.94" lengthAdjust="spacingAndGlyphs" >Calibri (Body)</text>
<path d="M630,197 L633.25,200.3 L636.5,197" stroke="#333" stroke-width="1.2" fill="none" />
<rect x="640.5" y="185.5" width="48" height="24.5" fill="#FFFFFF" stroke="#C8C6C4" stroke-width="1" />
<text x="642.23" y="201.4" font-size="13" fill="#323130" font-weight="normal" font-style="normal" textLength="14.29" lengthAdjust="spacingAndGlyphs" >35</text>
<path d="M679,197 L682.0,200.3 L685,197" stroke="#333" stroke-width="1.2" fill="none" />
<path d="M693.6,202.6 L699.0,189.7 L704.4,202.6 M695.76,198.47 H702.24" stroke="#444" stroke-width="1.3" fill="none" stroke-linejoin="miter"/>
<path d="M704.2,194 L706.6,191.2 L709,194" stroke="#2B88D8" stroke-width="1.4" fill="none" />
<path d="M719.2,202.6 L723.4000000000001,192.8 L727.6,202.6 M720.88,199.46 H725.92" stroke="#444" stroke-width="1.2" fill="none" stroke-linejoin="miter"/>
<path d="M727.8,191 L730.4,193.8 L733,191" stroke="#2B88D8" stroke-width="1.4" fill="none" />
<line x1="741" y1="191" x2="756.5" y2="191" stroke="#A19F9D" stroke-width="1.5" />
<line x1="741" y1="203.5" x2="756.5" y2="203.5" stroke="#A19F9D" stroke-width="1.5" />
<line x1="750" y1="195.2" x2="756.5" y2="195.2" stroke="#A19F9D" stroke-width="1.5" />
<line x1="750" y1="199.4" x2="756.5" y2="199.4" stroke="#A19F9D" stroke-width="1.5" />
<line x1="765" y1="191" x2="780.5" y2="191" stroke="#A19F9D" stroke-width="1.5" />
<line x1="765" y1="203.5" x2="780.5" y2="203.5" stroke="#A19F9D" stroke-width="1.5" />
<line x1="774" y1="195.2" x2="780.5" y2="195.2" stroke="#A19F9D" stroke-width="1.5" />
<line x1="774" y1="199.4" x2="780.5" y2="199.4" stroke="#A19F9D" stroke-width="1.5" />
<path d="M741.5,197.3 H747.5 M744,194.8 L741.5,197.3 L744,199.8" stroke="#A19F9D" stroke-width="1.2" fill="none" />
<path d="M765,197.3 H771 M768.5,194.8 L771,197.3 L768.5,199.8" stroke="#A19F9D" stroke-width="1.2" fill="none" />
<text x="544.48" y="230.75" font-size="13" fill="#333" font-weight="bold" font-style="normal" textLength="8.79" lengthAdjust="spacingAndGlyphs" >B</text>
<path d="M571,222.3 H577 M568.5,230.8 H574.5" stroke="#333" stroke-width="1.1" fill="none" />
<line x1="574" y1="222.3" x2="571.5" y2="230.8" stroke="#333" stroke-width="1.5" />
<text x="590.50" y="230.75" font-size="12.5" fill="#333" font-weight="normal" font-style="normal" textLength="11.00" lengthAdjust="spacingAndGlyphs" >U</text>
<line x1="591" y1="233" x2="601" y2="233" stroke="#333" stroke-width="1" />
<rect x="632" y="215" width="24" height="25.5" fill="#C8C6C4" stroke="none" stroke-width="1" />
<line x1="612.75" y1="220.6" x2="627.75" y2="220.6" stroke="#555" stroke-width="1.5" />
<line x1="612.75" y1="224.8" x2="621.5" y2="224.8" stroke="#555" stroke-width="1.5" />
<line x1="612.75" y1="229.2" x2="627.75" y2="229.2" stroke="#555" stroke-width="1.5" />
<line x1="612.75" y1="233.6" x2="621.5" y2="233.6" stroke="#555" stroke-width="1.5" />
<line x1="637" y1="220.6" x2="651.75" y2="220.6" stroke="#333" stroke-width="1.5" />
<line x1="639.5" y1="224.8" x2="649.2" y2="224.8" stroke="#333" stroke-width="1.5" />
<line x1="637" y1="229.2" x2="651.75" y2="229.2" stroke="#333" stroke-width="1.5" />
<line x1="639.5" y1="233.6" x2="649.2" y2="233.6" stroke="#333" stroke-width="1.5" />
<line x1="660" y1="220.6" x2="676" y2="220.6" stroke="#555" stroke-width="1.5" />
<line x1="666" y1="224.8" x2="676" y2="224.8" stroke="#555" stroke-width="1.5" />
<line x1="660" y1="229.2" x2="676" y2="229.2" stroke="#555" stroke-width="1.5" />
<line x1="666" y1="233.6" x2="676" y2="233.6" stroke="#555" stroke-width="1.5" />
<g transform="translate(423,90)">
<path d="M266.8,135.6 L272.6,129.8 C273.5,128.9 274.9,128.9 275.8,129.8 C276.7,130.7 276.7,132.1 275.8,133 L270,138.8 Z" stroke="#404040" stroke-width="1.3" fill="#FFFFFF" />
<path d="M266.8,135.6 L262.6,141.8 L270,138.8 Z" stroke="#606060" stroke-width="0.8" fill="#6A6A6A" />
</g>
<rect x="683" y="232" width="17.5" height="4.4" fill="#FFFF00" stroke="none" stroke-width="1" />
<path d="M708,226.6 L711.0,229.8 L714,226.6" stroke="#444" stroke-width="1.3" fill="none" />
<path d="M727.7,230.8 L732.35,219.6 L737,230.8 M729.56,227.22 H735.14" stroke="#444" stroke-width="1.15" fill="none" stroke-linejoin="miter"/>
<rect x="723.75" y="232" width="17.2" height="4.4" fill="#FF0000" stroke="none" stroke-width="1" />
<path d="M748,226.6 L751.25,229.8 L754.5,226.6" stroke="#444" stroke-width="1.3" fill="none" />
<g transform="translate(707,90)">
<path d="M64.3,133.3 L57.6,137.2 L64.5,145.5 L70.8,139.5 Z" stroke="#E67C16" stroke-width="1.4" fill="#FFFFFF" />
<path d="M61.5,141.3 L66.5,140.6 L64.5,145 Z" stroke="none" stroke-width="0" fill="#F9C976" />
<path d="M63.6,134.2 L66.3,131.7 L72.2,137.8 L69.6,140.3 Z" stroke="#404040" stroke-width="1.3" fill="#FFFFFF" />
<path d="M68.2,133.8 L71.8,129.9 C72.5,129.3 73.5,129.3 74.1,130 C74.8,130.6 74.8,131.6 74.1,132.3 L70.5,136.1" stroke="#404040" stroke-width="1.3" fill="#FFFFFF" />
</g>
<path d="M803.5,193.5 V201.5 H806 V206 L810.5,201.5 H821.5 V188.5 H809" stroke="#555" stroke-width="1.3" fill="none" />
<line x1="802" y1="193" x2="813" y2="193" stroke="#4CA65A" stroke-width="1.8" />
<line x1="807.5" y1="187.5" x2="807.5" y2="198.5" stroke="#4CA65A" stroke-width="1.8" />
<text x="801.10" y="223.25" font-size="12.5" fill="#4A4948" font-weight="normal" font-style="normal" textLength="22.90" lengthAdjust="spacingAndGlyphs" >New</text>
<text x="788.00" y="237.6" font-size="12.5" fill="#4A4948" font-weight="normal" font-style="normal" textLength="48.50" lengthAdjust="spacingAndGlyphs" >Comment</text>
<path d="M864.3,203.2 L869.15,192.5 L874,203.2 M866.24,199.78 H872.06" stroke="#444" stroke-width="1.2" fill="none" stroke-linejoin="miter"/>
<text x="875.02" y="203.2" font-size="12" fill="#444" font-weight="normal" font-style="normal" textLength="7.86" lengthAdjust="spacingAndGlyphs" >a</text>
<path d="M887,197.5 L890.0,200.5 L893,197.5" stroke="#333" stroke-width="1.2" fill="none" />
<text x="853.00" y="223.5" font-size="12.5" fill="#4A4948" font-weight="normal" font-style="normal" textLength="38.00" lengthAdjust="spacingAndGlyphs" >Change</text>
<text x="860.50" y="237.6" font-size="12.5" fill="#4A4948" font-weight="normal" font-style="normal" textLength="23.00" lengthAdjust="spacingAndGlyphs" >Case</text>
<line x1="904.5" y1="190.1" x2="923" y2="190.1" stroke="#555" stroke-width="1.4" />
<line x1="904.5" y1="194.3" x2="923" y2="194.3" stroke="#555" stroke-width="1.4" />
<line x1="904.5" y1="198.3" x2="923" y2="198.3" stroke="#555" stroke-width="1.4" />
<line x1="904.5" y1="202.3" x2="923" y2="202.3" stroke="#555" stroke-width="1.4" />
<line x1="904.5" y1="206.3" x2="923" y2="206.3" stroke="#555" stroke-width="1.4" />
<text x="898.50" y="230" font-size="12.5" fill="#4A4948" font-weight="normal" font-style="normal" textLength="30.00" lengthAdjust="spacingAndGlyphs" >Justify</text>
<path d="M957.4,200.8 L970.6,190.3 L968.3,206.8 M962.6,197.8 L968.6,200.8" stroke="#2B88D8" stroke-width="1.7" fill="none" stroke-linecap="round" stroke-linejoin="round"/>
<text x="935.10" y="223.5" font-size="12.5" fill="#4A4948" font-weight="normal" font-style="normal" textLength="59.10" lengthAdjust="spacingAndGlyphs" >Format Text</text>
<text x="947.90" y="237.6" font-size="12.5" fill="#4A4948" font-weight="normal" font-style="normal" textLength="33.00" lengthAdjust="spacingAndGlyphs" >Effects</text>
<rect x="246.5" y="67.5" width="231" height="107" fill="none" stroke="#F4523F" stroke-width="3" />
<rect x="533.5" y="180.8" width="252.8" height="63.7" fill="none" stroke="#F4523F" stroke-width="3" />
<text x="9.22" y="568" font-size="12" fill="#605E5C" font-weight="normal" font-style="normal" textLength="56.06" lengthAdjust="spacingAndGlyphs" >Slide 1 of 1</text>
<path d="M93.5,566 V557.8 H86.8 V570 H92 M93.5,557.8 H100.5 V565" stroke="#555" stroke-width="1.3" fill="none" />
<path d="M91,567 L95.3,571 L101.5,564.5" stroke="#555" stroke-width="1.3" fill="none" />
<circle cx="126.7" cy="558.8" r="1.9" fill="none" stroke="#555" stroke-width="1.1" />
<path d="M121,561.5 C121.5,559 123.5,559.5 126.7,561.6 C130,559.5 132,559 132.8,560.8 C133,561.8 131.5,562.5 130.3,562.8" stroke="#555" stroke-width="1.2" fill="none" />
<path d="M124.8,562 C125.3,564.5 124.5,567.5 123.5,570.5 C124.2,571 125.2,570 125.8,568.5" stroke="#555" stroke-width="1.2" fill="none" />
<path d="M129,564.8 L135,571 M135,564.8 L129,571" stroke="#555" stroke-width="1.2" fill="none" />
<text x="139.22" y="568" font-size="12" fill="#605E5C" font-weight="normal" font-style="normal" textLength="117.26" lengthAdjust="spacingAndGlyphs" >Accessibility: Investigate</text>
<path d="M628,561.5 L631.5,558 L635,561.5" stroke="#555" stroke-width="1.3" fill="none" />
<line x1="623" y1="564.5" x2="640" y2="564.5" stroke="#555" stroke-width="1.2" />
<line x1="623" y1="568.5" x2="640" y2="568.5" stroke="#555" stroke-width="1.2" />
<line x1="623" y1="572.5" x2="640" y2="572.5" stroke="#555" stroke-width="1.2" />
<text x="641.42" y="568" font-size="12" fill="#605E5C" font-weight="normal" font-style="normal" textLength="30.06" lengthAdjust="spacingAndGlyphs" >Notes</text>
<path d="M693.5,566.3 H690 V558 H704.3 V563.2" stroke="#555" stroke-width="1.3" fill="none" />
<path d="M702.10,562.52 L702.40,565.00 L704.40,566.50 L702.40,568.00 L702.10,570.48 L699.80,569.50 L697.50,570.48 L697.20,568.00 L695.20,566.50 L697.20,565.00 L697.50,562.52 L699.80,563.50 Z" stroke="#444" stroke-width="1.2" fill="none" />
<circle cx="699.8" cy="566.5" r="1.1" fill="#333" stroke="none" stroke-width="1" />
<text x="707.32" y="568" font-size="12" fill="#605E5C" font-weight="normal" font-style="normal" textLength="78.16" lengthAdjust="spacingAndGlyphs" >Display Settings</text>
<line x1="808" y1="563.8" x2="816" y2="563.8" stroke="#555" stroke-width="1.2" />
<line x1="822" y1="564.5" x2="928" y2="564.5" stroke="#555" stroke-width="1.2" />
<rect x="843" y="558" width="4.8" height="11.6" fill="#323130" stroke="none" stroke-width="1" />
<line x1="875" y1="561.3" x2="875" y2="567" stroke="#777" stroke-width="1" />
<path d="M933.4,563.5 H941.6 M937.5,559.6 V567.4" stroke="#555" stroke-width="1.2" fill="none" />
<text x="955.52" y="567.6" font-size="12" fill="#605E5C" font-weight="normal" font-style="normal" textLength="20.96" lengthAdjust="spacingAndGlyphs" >47%</text>
<rect x="994.5" y="559.5" width="7" height="7" fill="none" stroke="#555" stroke-width="1.2" />
<path d="M993,560.5 L990.5,563 L993,565.5 M1003,560.5 L1005.5,563 L1003,565.5 M995.5,557.5 L998,555.5 L1000.5,557.5 M995.5,568.5 L998,570.5 L1000.5,568.5" stroke="#555" stroke-width="1.1" fill="none" />
</svg>
</body></html>
